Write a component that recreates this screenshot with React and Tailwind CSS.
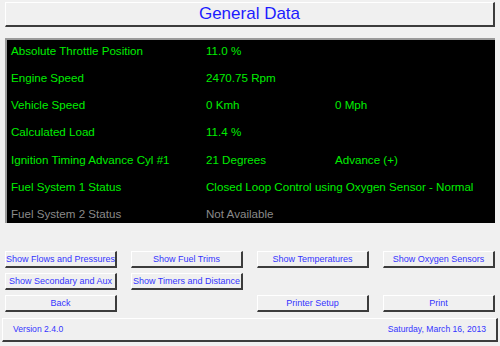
const rows = [
  { label: "Absolute Throttle Position", value: "11.0 %", extra: "" },
  { label: "Engine Speed", value: "2470.75 Rpm", extra: "" },
  { label: "Vehicle Speed", value: "0 Kmh", extra: "0 Mph" },
  { label: "Calculated Load", value: "11.4 %", extra: "" },
  { label: "Ignition Timing Advance Cyl #1", value: "21 Degrees", extra: "Advance (+)" },
  { label: "Fuel System 1 Status", value: "Closed Loop Control using Oxygen Sensor - Normal", extra: "" },
  { label: "Fuel System 2 Status", value: "Not Available", extra: "", disabled: true },
];

function Button({ children }) {
  return (
    <button className="h-[17px] w-full bg-[#f0f0f0] border-t border-l border-t-white border-l-white border-b-2 border-r-2 border-b-[#3c3c3c] border-r-[#3c3c3c] text-[9px] leading-none whitespace-nowrap text-[#3434ff]">
      {children}
    </button>
  );
}

export default function App() {
  return (
    <div
      className="w-[500px] h-[346px] bg-[#f0f0f0] flex flex-col overflow-hidden"
      style={{ fontFamily: '"Liberation Sans", Arial, sans-serif' }}
    >
      <div className="mx-[5px] mt-[2px] h-[25px] flex items-center justify-center border-t border-l border-t-white border-l-white border-b-2 border-r-2 border-b-[#3c3c3c] border-r-[#3c3c3c] text-[17px] text-[#1c1cff]">
        General Data
      </div>

      <div className="mx-[5px] mt-[11px] h-[185px] bg-black border-t-2 border-l-2 border-t-[#9a9a9a] border-l-[#9a9a9a] flex flex-col justify-between py-[2px] pl-[4px]">
        {rows.map((r) => (
          <div
            key={r.label}
            className={`grid grid-cols-[195px_129px_1fr] h-[16px] items-center text-[11.6px] whitespace-nowrap ${
              r.disabled ? "text-[#8a8a8a]" : "text-[#00ee00]"
            }`}
          >
            <span>{r.label}</span>
            <span>{r.value}</span>
            <span>{r.extra}</span>
          </div>
        ))}
      </div>

      <div className="mx-[5px] mt-[28px] grid grid-cols-4 gap-x-[14px] gap-y-[5px]">
        <Button>Show Flows and Pressures</Button>
        <Button>Show Fuel Trims</Button>
        <Button>Show Temperatures</Button>
        <Button>Show Oxygen Sensors</Button>
        <Button>Show Secondary and Aux</Button>
        <Button>Show Timers and Distance</Button>
        <div />
        <div />
        <Button>Back</Button>
        <div />
        <Button>Printer Setup</Button>
        <Button>Print</Button>
      </div>

      <div className="mx-[2px] mt-[6px] h-[24px] flex items-center justify-between px-[10px] border-t border-l border-t-white border-l-white border-b-2 border-r-2 border-b-[#3c3c3c] border-r-[#3c3c3c] text-[8.6px] text-[#3434ff]">
        <span>Version 2.4.0</span>
        <span>Saturday, March 16, 2013</span>
      </div>
    </div>
  );
}
